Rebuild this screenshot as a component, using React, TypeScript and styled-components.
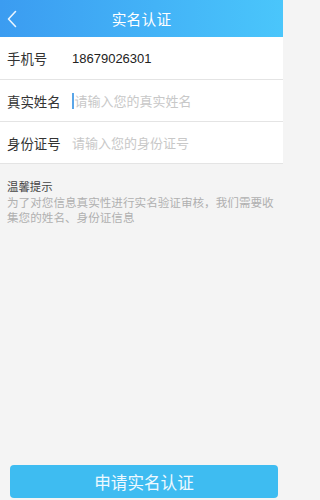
import React from "react";
import styled, { createGlobalStyle } from "styled-components";

const GlobalStyle = createGlobalStyle`
  html, body {
    margin: 0;
    padding: 0;
    background: #f4f4f4;
    font-family: "Liberation Sans", "Noto Sans CJK SC", sans-serif;
  }
  * { box-sizing: border-box; }
`;

const fields = [
  { label: "手机号", value: "18679026301" },
  { label: "真实姓名", placeholder: "请输入您的真实姓名", focused: true },
  { label: "身份证号", placeholder: "请输入您的身份证号" },
];

const App = () => {
  return (
    <Page>
      <GlobalStyle />
      <Header>
        <Back>
          <svg width="10" height="18" viewBox="0 0 10 18" fill="none">
            <path d="M8.5 1.5L1.5 9l7 7.5" stroke="#e8f4ff" strokeWidth="1.6" strokeLinecap="round" strokeLinejoin="round" />
          </svg>
        </Back>
        <Title>实名认证</Title>
      </Header>
      <Form>
        {fields.map((f) => (
          <Row key={f.label}>
            <Label>{f.label}</Label>
            {f.value ? (
              <Value>{f.value}</Value>
            ) : (
              <Placeholder>
                {f.focused && <Caret />}
                {f.placeholder}
              </Placeholder>
            )}
          </Row>
        ))}
      </Form>
      <Tips>
        <TipTitle>温馨提示</TipTitle>
        <TipText>为了对您信息真实性进行实名验证审核，我们需要收集您的姓名、身份证信息</TipText>
      </Tips>
      <Spacer />
      <Footer>
        <Submit>申请实名认证</Submit>
      </Footer>
    </Page>
  );
};

export default App;

const Page = styled.div`
  width: 283px;
  height: 500px;
  display: flex;
  flex-direction: column;
  background: #f4f4f4;
`;

const Header = styled.div`
  height: 37px;
  flex-shrink: 0;
  display: flex;
  align-items: center;
  justify-content: center;
  position: relative;
  background: linear-gradient(90deg, #3b9cf1 0%, #43b3f7 55%, #4ac6fb 100%);
`;

const Back = styled.div`
  position: absolute;
  left: 7px;
  top: 10px;
  display: flex;
`;

const Title = styled.div`
  color: #fff;
  font-size: 14.7px;
  letter-spacing: 0.2px;
`;

const Form = styled.div`
  background: #fff;
  display: flex;
  flex-direction: column;
`;

const Row = styled.div`
  height: 42px;
  display: flex;
  align-items: center;
  padding-left: 7px;
  border-bottom: 1px solid #e4e4e4;
  &:first-child {
    height: 43px;
  }
`;

const Label = styled.div`
  width: 65px;
  font-size: 13.4px;
  color: #333;
`;

const Value = styled.div`
  font-size: 13px;
  color: #222;
`;

const Placeholder = styled.div`
  display: flex;
  align-items: center;
  font-size: 13px;
  color: #c8c8c8;
`;

const Caret = styled.span`
  width: 1.5px;
  height: 16px;
  background: #5aa6e8;
  margin-right: 1px;
`;

const Tips = styled.div`
  padding: 16px 7px 0 7px;
  display: flex;
  flex-direction: column;
`;

const TipTitle = styled.div`
  font-size: 11.4px;
  color: #444;
  line-height: 14px;
`;

const TipText = styled.div`
  font-size: 11.6px;
  color: #b0b0b0;
  line-height: 15px;
  margin-top: 1px;
`;

const Spacer = styled.div`
  flex: 1;
`;

const Footer = styled.div`
  padding: 0 5px 2px 10px;
`;

const Submit = styled.div`
  height: 33px;
  border-radius: 4px;
  background: #3ebcf1;
  color: #eef9ff;
  font-size: 16.6px;
  display: flex;
  align-items: center;
  justify-content: center;
`;
